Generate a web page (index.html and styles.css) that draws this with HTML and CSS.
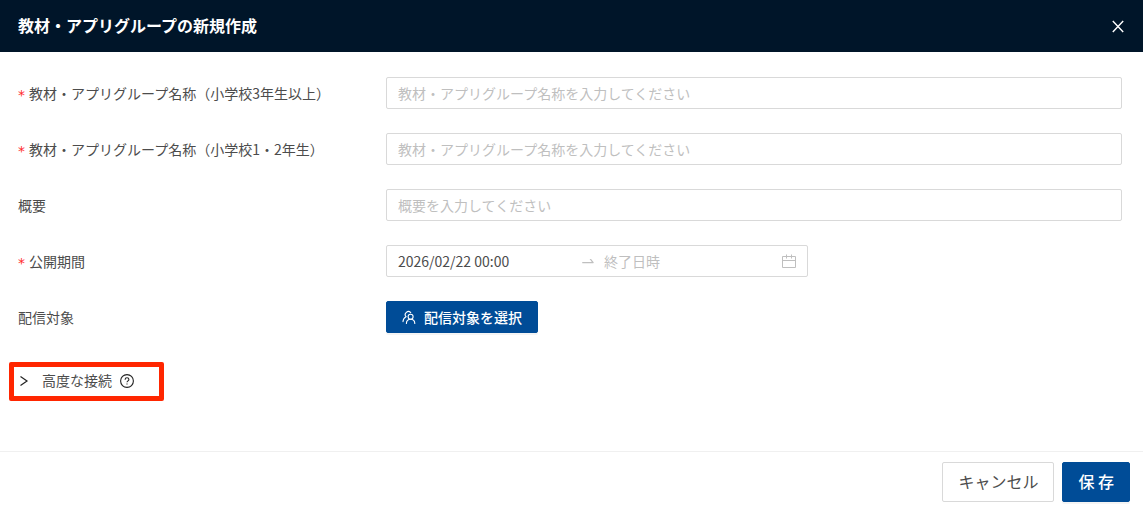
FILE: index.html
```html
<!DOCTYPE html>
<html lang="ja">
<head>
    <meta charset="UTF-8">
    <meta name="viewport" content="width=device-width, initial-scale=1.0">
    <title>教材・アプリグループの新規作成</title>
    <link rel="stylesheet" href="styles.css">
</head>
<body>

    <header class="drawer-header">
        <h1 class="drawer-title">教材・アプリグループの新規作成</h1>
        <button type="button" class="close-button" aria-label="閉じる">
            <svg width="16" height="16" viewBox="0 0 16 16" fill="none" stroke="currentColor" stroke-width="1.4">
                <path d="M2.8 4L13.2 15M13.2 4L2.8 15"/>
            </svg>
        </button>
    </header>

    <form id="groupForm" class="group-form">
        <div class="form-row">
            <label class="form-label required" for="groupName">教材・アプリグループ名称（小学校3年生以上）</label>
            <input class="text-input" id="groupName" type="text" placeholder="教材・アプリグループ名称を入力してください">
        </div>
        <div class="form-row">
            <label class="form-label required" for="groupNameLower">教材・アプリグループ名称（小学校1・2年生）</label>
            <input class="text-input" id="groupNameLower" type="text" placeholder="教材・アプリグループ名称を入力してください">
        </div>
        <div class="form-row">
            <label class="form-label" for="summary">概要</label>
            <input class="text-input" id="summary" type="text" placeholder="概要を入力してください">
        </div>
        <div class="form-row">
            <label class="form-label required" for="startDate">公開期間</label>
            <div class="range-picker">
                <input class="range-input" id="startDate" type="text" value="2026/02/22 00:00">
                <svg class="range-arrow" width="16" height="16" viewBox="0 0 1024 1024" fill="currentColor">
                    <path d="M873.1 596.2l-164-208A32 32 0 00684 376h-64.8c-6.7 0-10.4 7.7-6.3 13l144.3 183H152c-4.4 0-8 3.6-8 8v60c0 4.4 3.6 8 8 8h695.9c26.8 0 41.7-30.8 25.2-51.8z"/>
                </svg>
                <input class="range-input" id="endDate" type="text" placeholder="終了日時" aria-label="終了日時">
                <svg class="range-calendar" width="14" height="14" viewBox="0 0 14 14" fill="none" stroke="currentColor">
                    <path d="M.5 2.5h13v11H.5zM.5 6.5h13M4.5.5v4M9.5.5v4"/>
                </svg>
            </div>
        </div>
        <div class="form-row">
            <label class="form-label" for="selectTarget">配信対象</label>
            <button type="button" class="button primary" id="selectTarget">
                <svg width="14" height="14" viewBox="0 0 14 14" fill="none" stroke="currentColor" stroke-width="1.1" stroke-linecap="round">
                    <circle cx="8.6" cy="6.8" r="2.5"/>
                    <path d="M4.4 13.4c.1-2.5 1.8-4.1 4.2-4.1s4.1 1.6 4.2 4.1"/>
                    <path d="M8.7 2.7A2.9 2.9 0 1 0 4 6.7C2.3 7.6 1.1 9.2 1 11.6"/>
                </svg>
                配信対象を選択
            </button>
        </div>

        <button type="button" class="advanced-toggle" aria-expanded="false">
            <svg class="chevron" width="10" height="12" viewBox="0 0 10 12" fill="none" stroke="currentColor" stroke-width="1.2">
                <path d="M1.5 1.5L8 6L1.5 10.5"/>
            </svg>
            <span class="advanced-label">高度な接続</span>
            <svg width="14" height="14" viewBox="0 0 14 14" fill="none" stroke="currentColor" stroke-width="1.1">
                <circle cx="7" cy="7" r="6.4"/>
                <path d="M5.1 5.7c0-1.2.8-1.9 1.9-1.9s1.9.7 1.9 1.7c0 1.3-1.9 1.4-1.9 2.8"/>
                <path d="M7 9.4v1.2"/>
            </svg>
        </button>
    </form>

    <footer class="drawer-footer">
        <button type="button" class="button large">キャンセル</button>
        <button type="submit" form="groupForm" class="button large primary">保 存</button>
    </footer>

</body>
</html>
```
FILE: styles.css
```css
* {
    box-sizing: border-box;
}
body {
    display: flex;
    flex-direction: column;
    min-height: 100vh;
    margin: 0;
    background-color: #fff;
    color: #4c4c4c;
    font-family: "Noto Sans CJK JP", sans-serif;
    font-size: 14px;
    line-height: 22px;
}
button, input {
    font: inherit;
    color: inherit;
}
button {
    cursor: pointer;
}
svg {
    flex: none;
}

/* Header */
.drawer-header {
    display: flex;
    align-items: center;
    justify-content: space-between;
    height: 52px;
    padding: 0 17px 2px 18px;
    background-color: #001529;
    color: #fff;
}
.drawer-title {
    margin: 0;
    font-size: 16px;
    font-weight: 700;
}
.close-button {
    display: flex;
    padding: 0;
    border: none;
    background: none;
}

/* Form */
.group-form {
    display: flex;
    flex: 1;
    flex-direction: column;
    gap: 24px;
    padding: 25px 21px 24px 18px;
}
.form-row {
    display: grid;
    grid-template-columns: 1fr 2fr;
    align-items: center;
    justify-items: start;
}
.required::before {
    content: "*";
    margin-right: 4px;
    color: #ff2a2d;
    font-family: "DejaVu Sans", sans-serif;
    line-height: 1;
    vertical-align: -1px;
}
.text-input {
    width: 100%;
    height: 32px;
    padding: 4px 11px;
    border: 1px solid #d9d9d9;
    border-radius: 2px;
}
input::placeholder {
    color: #bfbfbf;
}
.range-picker {
    display: flex;
    align-items: center;
    width: 422px;
    max-width: 100%;
    height: 32px;
    padding: 0 11px;
    border: 1px solid #d9d9d9;
    border-radius: 2px;
    color: #bfbfbf;
}
.range-input {
    flex: 1;
    min-width: 0;
    padding: 0;
    border: none;
    outline: none;
    background: none;
    color: #4c4c4c;
}
.range-arrow {
    margin: 0 8px;
}
.range-calendar {
    margin-left: 4px;
}

/* Buttons */
.button {
    display: flex;
    align-items: center;
    gap: 8px;
    height: 32px;
    padding: 0 15px;
    border: 1px solid #d9d9d9;
    border-radius: 2px;
    background-color: #fff;
}
.button.large {
    height: 40px;
    padding-bottom: 2px;
    font-size: 16px;
}
.button.primary {
    border-color: #004c97;
    background-color: #004c97;
    box-shadow: 0 2px 0 rgba(0, 0, 0, 0.045);
    color: #fff;
    font-weight: 500;
}
.advanced-toggle {
    display: flex;
    align-items: center;
    align-self: flex-start;
    gap: 8px;
    height: 39px;
    margin: 5px 0 0 -9px;
    padding: 0 25px 2px 5px;
    border: 5px solid #ff2600;
    border-radius: 2px;
    background: none;
}
.advanced-toggle svg {
    color: #222;
}
.advanced-label {
    padding-bottom: 2px;
}
.chevron {
    margin-right: 5px;
}

/* Footer */
.drawer-footer {
    display: flex;
    justify-content: flex-end;
    gap: 8px;
    padding: 10px 13px 7px;
    border-top: 1px solid #f0f0f0;
}
```
